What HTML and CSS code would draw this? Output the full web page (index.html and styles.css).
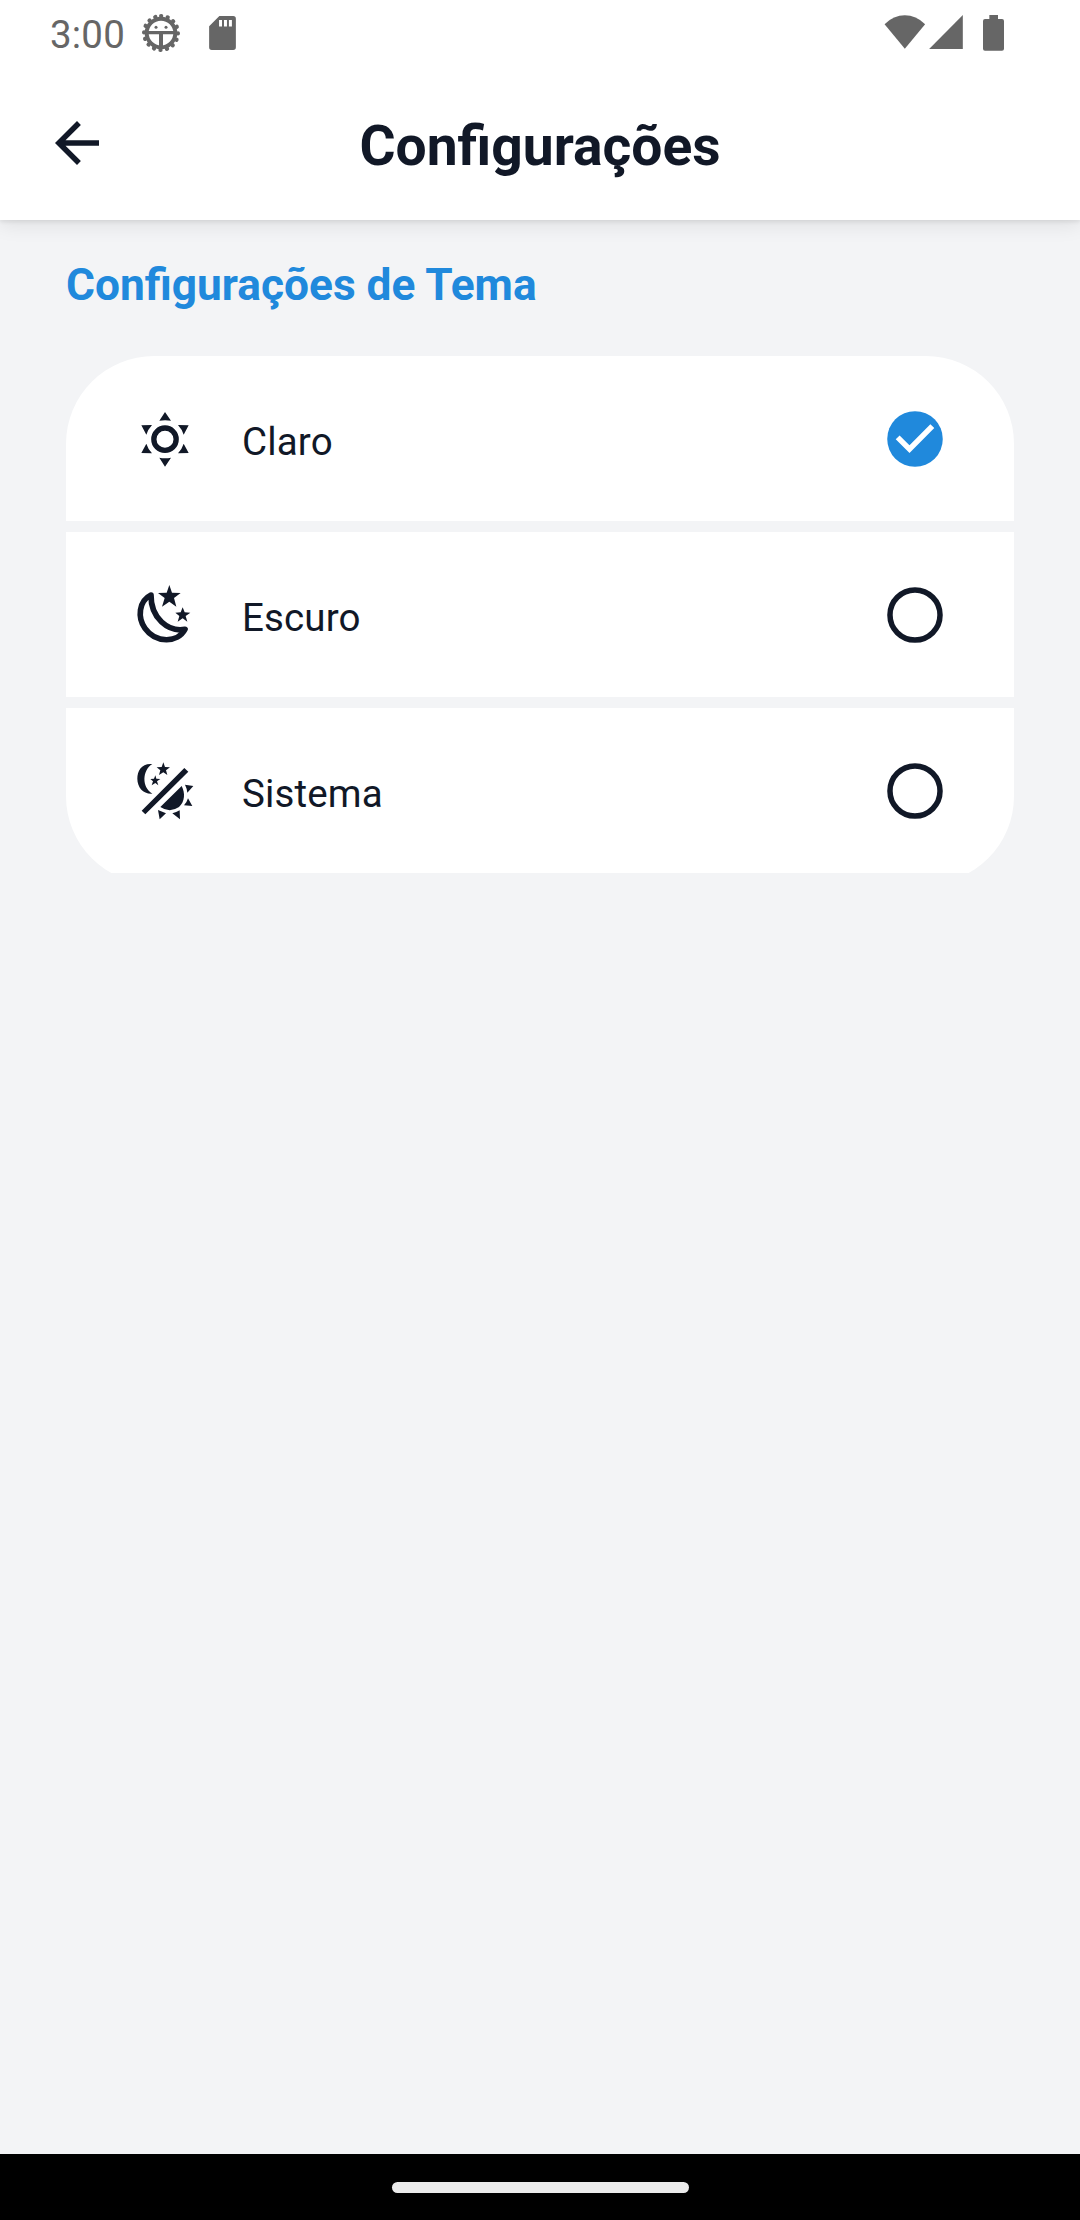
FILE: index.html
```html
<!DOCTYPE html>
<html lang="pt-BR">
<head>
<meta charset="utf-8">
<title>Configurações</title>
<link rel="stylesheet" href="styles.css">
</head>
<body>
<div class="screen">
  <header class="top">
    <div class="status">
      <span class="clock">3:00</span>
      <svg class="bug" viewBox="334 39 120 120">
        <circle cx="394" cy="99" r="51" fill="none" stroke="currentColor" stroke-width="12" stroke-linecap="round" stroke-dasharray="1 19.028" transform="rotate(-90 394 99)"/>
        <circle cx="394" cy="99" r="43" fill="none" stroke="currentColor" stroke-width="12"/>
        <path d="M354 93h80v10h-80zM388 98h12v46h-12z" fill="currentColor"/>
        <circle cx="379" cy="82" r="4.500" fill="currentColor"/><circle cx="409" cy="82" r="4.500" fill="currentColor"/>
      </svg>
      <svg class="sd" viewBox="537 48 81 103"><path fill="currentColor" fill-rule="evenodd" d="M568 48h42q8 0 8 8v87q0 8-8 8h-65q-8 0-8-8V79zM567 60v20h9V60zM582 60v20h9V60zM597 60v20h9V60z"/></svg>
      <span class="spacer"></span>
      <svg class="wifi" viewBox="68 45 125 104"><path fill="currentColor" d="M68 73Q96 46 130 46t62 27l-62 75z"/></svg>
      <svg class="signal" viewBox="203 45 103 104"><path fill="currentColor" d="M203 149L306 45v104z"/></svg>
      <svg class="battery" viewBox="366 45 63 108"><path fill="currentColor" d="M385 45h26v12h12q6 0 6 6v83q0 6-6 6h-51q-6 0-6-6V63q0-6 6-6h13z"/></svg>
    </div>
    <div class="appbar">
      <svg class="back" viewBox="0 0 24 24"><path fill="currentColor" d="M20 11H7.83l5.59-5.59L12 4l-8 8 8 8 1.41-1.41L7.83 13H20z"/></svg>
      <h1 class="title">Configurações</h1>
    </div>
  </header>
  <main class="content">
    <h2 class="section">Configurações de Tema</h2>
    <ul class="options">
      <li class="option">
        <svg class="icon" viewBox="36 48 198 198">
          <circle cx="135" cy="147.500" r="33.500" fill="none" stroke="currentColor" stroke-width="16"/>
          <path fill="currentColor" d="M135 66l18 26q-18-3-35 0zM135 230l18-27q-18 4-35 0zM64 106l32-1q-12 13-17 29zM206 106l-32-1q12 13 17 29zM64 189l32 1q-12-13-17-29zM206 189l-32 1q12-13 17-29z"/>
        </svg>
        <span class="label">Claro</span>
        <svg class="radio checked" viewBox="0 0 24 24"><circle cx="12" cy="12" r="10.100" fill="currentColor"/><path class="tick" d="M5.700 11.400L10 15.700l8.300-8.400"/></svg>
      </li>
      <li class="option">
        <svg class="icon" viewBox="36 51 198 198">
          <path class="moon" d="M93 90C56 108 52 158 75 190C108 236 174 234 195 193C145 202 92 160 93 90Z"/>
          <path fill="currentColor" d="M148 60l8 23 26 1-20 15 7 26-21-15-22 15 8-26-20-15 26-1zM188 127l6 15 17 1-14 10 5 17-14-10-15 10 5-17-12-10 16-1z"/>
        </svg>
        <span class="label">Escuro</span>
        <svg class="radio" viewBox="0 0 24 24"><circle cx="12" cy="12" r="9.100" fill="none" stroke="currentColor" stroke-width="2"/></svg>
      </li>
      <li class="option">
        <svg class="icon" viewBox="36 54 198 198">
          <path fill="currentColor" d="M97 72C65 69 52 92 52 116C52 142 70 163 97 161C65 142 66 91 97 72ZM130 67l5 14 15 1-12 9 4 14-12-8-13 8 4-14-11-9 15-1zM106 106l3 10 12 1-10 7 4 12-9-7-11 7 4-12-8-7 11-1zM65 212L193 84l12 11L76 223zM121 201L185 138C196 159 195 185 177 201Q149 220 121 201ZM195 134l25 4-18 20q-1-12-7-24zM204 175l13 23-25-2q9-10 12-21zM114 210l24 10-19 18zM157 220q12-3 22-9l1 27z"/>
        </svg>
        <span class="label">Sistema</span>
        <svg class="radio" viewBox="0 0 24 24"><circle cx="12" cy="12" r="9.100" fill="none" stroke="currentColor" stroke-width="2"/></svg>
      </li>
    </ul>
  </main>
  <footer class="navbar"><span class="handle"></span></footer>
</div>
</body>
</html>
```
FILE: styles.css
```css
* { box-sizing: border-box; margin: 0; padding: 0; }
body { font-family: Roboto, sans-serif; color: #111827; background: #f3f4f6; }
svg { display: block; flex: none; }
.screen { display: flex; flex-direction: column; width: 1080px; height: 2220px; }
.top { height: 220px; background: #fff; box-shadow: 0 2px 4px rgba(0, 0, 0, .08), 0 6px 18px rgba(0, 0, 0, .08); }
.status { display: flex; align-items: flex-start; height: 66px; padding: 12px 76px 0 50px; color: #666; }
.clock { width: 91px; font-size: 38.5px; line-height: 46px; letter-spacing: .2px; }
.bug { width: 40px; height: 40px; margin-top: 1px; }
.sd { width: 27px; height: 34px; margin: 4px 0 0 28px; }
.spacer { flex: 1; }
.wifi { width: 42px; height: 34px; margin-top: 3px; }
.signal { width: 34px; height: 34px; margin: 3px 20px 0 3px; }
.battery { width: 21px; height: 36px; margin-top: 3px; }
.appbar { display: grid; grid-template-columns: 66px 1fr 66px; align-items: start; padding: 44px 44px 0; }
.back { width: 66px; height: 66px; }
.title { padding-top: 4px; font-size: 55.2px; line-height: 64px; font-weight: 700; text-align: center; }
.content { flex: 1; padding: 0 66px; }
.section { padding: 39px 0 45px; font-size: 44.25px; line-height: 52px; font-weight: 700; color: #2089dc; }
.options { list-style: none; border-radius: 88px; overflow: hidden; }
.option { display: flex; align-items: center; height: 165px; margin-bottom: 11px; padding: 1px 66px 0; background: #fff; }
.icon { width: 66px; height: 66px; }
.label { flex: 1; padding: 6px 0 0 44px; font-size: 38.5px; line-height: 52px; letter-spacing: .15px; }
.moon { fill: none; stroke: currentColor; stroke-width: 17; stroke-linejoin: round; }
.radio { width: 66px; height: 66px; }
.checked { color: #2089dc; }
.tick { fill: none; stroke: #fff; stroke-width: 2; }
.navbar { display: flex; align-items: center; justify-content: center; height: 66px; background: #000; }
.handle { width: 297px; height: 11px; border-radius: 6px; background: #ebebeb; }
```
